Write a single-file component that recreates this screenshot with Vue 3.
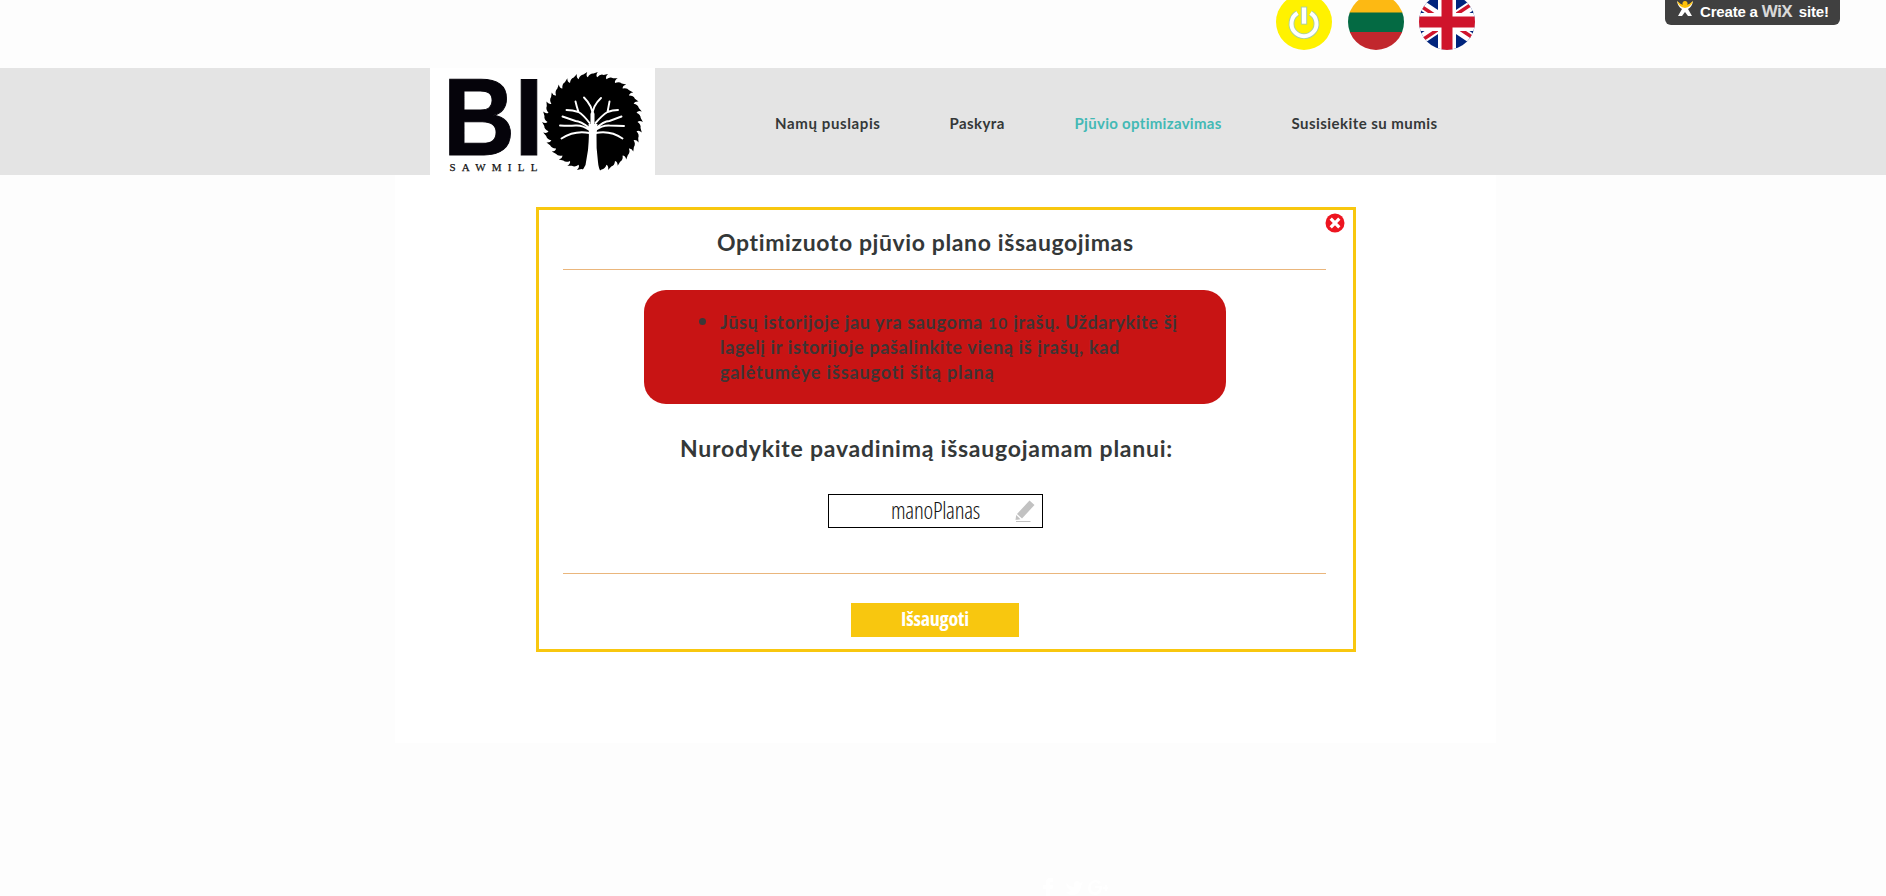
<script setup>
const nav = [
  { label: 'Namų puslapis', cls: 'home' },
  { label: 'Paskyra', cls: 'account' },
  { label: 'Pjūvio optimizavimas', cls: 'active' },
  { label: 'Susisiekite su mumis', cls: 'contact' },
]

// Circular saw outline: hooked teeth around the disc
const teeth = 30
const pt = (r, a) => `${(50 + r * Math.cos(a)).toFixed(2)} ${(50 + r * Math.sin(a)).toFixed(2)}`
const step = (Math.PI * 2) / teeth
let blade = `M${pt(45, 0)}`
for (let i = 0; i < teeth; i++) {
  const a = i * step
  blade += `Q${pt(48.8, a + step * 0.25)} ${pt(48.4, a + step * 0.6)}L${pt(50.4, a + step)}Q${pt(47, a + step * 0.8)} ${pt(45, a + step)}`
}
blade += 'Z'
</script>

<template>
  <div class="page">
    <div class="topbar">
      <div class="circles">
        <svg class="circle" viewBox="0 0 56 56">
          <circle cx="28" cy="28" r="28" fill="#fff200" />
          <g fill="none" stroke-linecap="butt">
            <path d="M21.500 19A12.500 12.500 0 1 0 34.500 19" stroke="#a9cfa0" stroke-width="5.800" />
            <path d="M28 12.600V30.600" stroke="#a9cfa0" stroke-width="6.400" />
            <path d="M21.500 19A12.500 12.500 0 1 0 34.500 19" stroke="#fff" stroke-width="4" />
            <path d="M28 13.500V29.700" stroke="#fff" stroke-width="4.400" />
          </g>
        </svg>
        <svg class="circle" viewBox="0 0 56 56">
          <defs><clipPath id="lt"><circle cx="28" cy="28" r="28" /></clipPath></defs>
          <g clip-path="url(#lt)">
            <path fill="#fdb913" d="M0 0h56v19H0z" />
            <path fill="#046a43" d="M0 18.500h56v20H0z" />
            <path fill="#c1272d" d="M0 38h56v18H0z" />
          </g>
        </svg>
        <svg class="circle" viewBox="0 0 56 56">
          <defs><clipPath id="uk"><circle cx="28" cy="28" r="28" /></clipPath></defs>
          <g clip-path="url(#uk)">
            <path fill="#00247d" d="M0 0h56v56H0z" />
            <path d="M-8 4L64 52M64 4L-8 52" stroke="#fff" stroke-width="10" />
            <path d="M-8 5.500L28 29.500M28 26.500L64 2.500M64 50.500L28 26.500M28 29.500L-8 53.500" stroke="#cf142b" stroke-width="3.500" />
            <path d="M28 0V56M0 28H56" stroke="#fff" stroke-width="18" />
            <path d="M28 0V56M0 28H56" stroke="#cf142b" stroke-width="11" />
          </g>
        </svg>
      </div>
      <div class="wix">
        <svg class="wix-man" viewBox="0 0 18 18">
          <path d="M1 1Q2 7 6 9L2 16H6L9 12L12 16H16L12 9Q16 7 17 1Q13 6 9 6Q5 6 1 1Z" fill="#fff" />
          <path d="M1 1Q3 7 9 8Q15 7 17 1Q13 5 9 5.500Q5 5 1 1Z" fill="#ffc20a" />
          <circle cx="9" cy="3.500" r="2.500" fill="#ffc20a" />
        </svg>
        <span class="wix-text">Create a</span>
        <span class="wix-logo">WiX</span>
        <span class="wix-text">site!</span>
      </div>
    </div>

    <header class="header">
      <svg class="logo" viewBox="0 0 225 107">
        <rect width="225" height="107" fill="#fff" />
        <g class="bi">
          <text x="13" y="86.500" font-size="110" textLength="72" lengthAdjust="spacingAndGlyphs">B</text>
          <text x="84" y="86.500" font-size="110" textLength="30" lengthAdjust="spacingAndGlyphs">I</text>
        </g>
        <text class="mill" x="19.500" y="102.500" font-size="11" textLength="88">SAWMILL</text>
        <svg x="112" y="3.500" width="101" height="101" viewBox="-.5 -.5 101 101">
          <path :d="blade" fill="#000" />
          <path fill="#fff" d="M46 52Q47 62 45.500 78L43 93Q41 97 38 101H59Q56 97 55.500 90Q53.500 76 54 63L55 52Z" />
          <g fill="none" stroke="#fff" stroke-linecap="round">
            <path stroke-width="4" d="M50 62V42" />
            <path stroke-width="1.900" d="M50 43Q50 34 58.500 26M50 43Q50 34 41.500 25.500M47 51Q41 43 36 40Q34 34 33 29.500M36 40Q30 38 24 38M53 51Q60 43 65 40Q66 35 67 29.500M65 40Q70 38 75.500 38M47 56Q38 49 33 49L20 44.500M33 53.500Q26 54 17.500 53.500M47 58Q40 53 33 53.500M53 57Q61 49 67 49L79 44.500M53 58Q60 53 67 53.500L81.500 54M47 61Q32 58 19 66.500M53 61Q68 58 80 66.500" />
          </g>
        </svg>
      </svg>
      <nav class="nav">
        <a v-for="n in nav" :key="n.label" :class="['link', n.cls]">{{ n.label }}</a>
      </nav>
    </header>

    <main class="content">
      <section class="dialog">
        <svg class="close" viewBox="0 0 20 20">
          <circle cx="10" cy="10" r="9.500" fill="#ed1520" />
          <path d="M5.700 5.700L14.300 14.300M14.300 5.700L5.700 14.300" stroke="#fff" stroke-width="3.200" />
        </svg>
        <h1 class="title"><span class="t1">Optimizuoto pjūvio plano išsaugojimas</span></h1>
        <hr class="rule" />
        <div class="alert">
          <span class="bullet"></span>
          <p class="message">
            <span class="m1">Jūsų istorijoje jau yra saugoma <small>10</small> įrašų. Uždarykite šį</span>
            <span class="m2">lagelį ir istorijoje pašalinkite vieną iš įrašų, kad</span>
            <span class="m3">galėtumėye išsaugoti šitą planą</span>
          </p>
        </div>
        <h2 class="prompt"><span class="t2">Nurodykite pavadinimą išsaugojamam planui:</span></h2>
        <div class="field">
          <span class="value">manoPlanas</span>
          <svg class="pencil" viewBox="0 0 20 23">
            <path fill="#c2c2c2" d="M14.500 .5L19.500 5L7 18.500L2 14ZM1.200 15L5.500 19.200L.5 20Z" />
            <path fill="#c2c2c2" d="M1 21H15.500V22H1Z" />
          </svg>
        </div>
        <hr class="rule second" />
        <button class="save"><span>Išsaugoti</span></button>
      </section>
    </main>

    <footer class="social">
      <svg width="66" height="22" viewBox="0 0 66 22" fill="#fff">
        <path d="M4 20V11H1V7H4V4Q4 0 8 0H11V4H9Q8 4 8 5V7H11L10.500 11H8V20Z" />
        <path d="M24 14Q28 14 29 12Q25 11 24 5Q28 9 32 9Q31 3 35 3Q37 3 38 5L41 4L39 8Q38 18 29 17Q26 17 24 14Z" />
        <path d="M57 6Q54 3 51 5Q48 7 49 11Q50 15 54 14Q57 13 57 10H53V8H60Q60 17 53 17Q46 16 46 10Q47 3 53 2Q57 2 59 4ZM61 9H63V7H65V9H66V11H65V13H63V11H61Z" />
      </svg>
    </footer>
  </div>
</template>

<style>
body {
  margin: 0;
  background: #fdfdfd;
}
</style>

<style scoped>
.page {
  height: 896px;
  overflow: hidden;
  display: flex;
  flex-direction: column;
  background: #fdfdfd;
  font-family: Lato, "Open Sans", sans-serif;
  color: #343838;
}
.topbar {
  height: 68px;
  flex: none;
  display: flex;
  justify-content: space-between;
  align-items: flex-start;
  padding: 0 46px 0 1276px;
}
.circles {
  display: flex;
  gap: 15.500px;
  margin-top: -6px;
}
.circle {
  width: 56px;
  height: 56px;
  display: block;
}
.wix {
  box-sizing: border-box;
  width: 175px;
  height: 25px;
  border-radius: 0 0 6px 6px;
  background: #404040;
  color: #fff;
  display: flex;
  align-items: flex-start;
  padding-left: 11px;
  font: bold 15px/24px "Liberation Sans", Arial, sans-serif;
  white-space: nowrap;
}
.wix-man {
  width: 18px;
  height: 18px;
  margin-right: 6px;
}
.wix-text {
  letter-spacing: -0.180px;
}
.wix-logo {
  width: 30px;
  margin: 0 7px 0 4px;
  font: 700 16.500px/21px "Open Sans", sans-serif;
  color: #d8d8d8;
  letter-spacing: -0.600px;
}
.header {
  height: 107px;
  flex: none;
  display: flex;
  background: #e4e4e4;
  padding-left: 430px;
}
.logo {
  width: 225px;
  height: 107px;
  flex: none;
  overflow: visible;
}
.bi {
  font-family: "Liberation Sans", Arial, sans-serif;
  font-weight: bold;
  fill: #05030a;
  stroke: #05030a;
  stroke-width: 1px;
}
.mill {
  font-family: "Liberation Serif", serif;
  fill: #111;
  stroke: #111;
  stroke-width: 0.250px;
}
.nav {
  display: flex;
  margin-left: 120px;
  padding-top: 43px;
}
.link {
  font-size: 15px;
  line-height: 24px;
  font-weight: 700;
  white-space: nowrap;
}
.home { width: 174.500px; letter-spacing: 0.620px; }
.account { width: 125px; letter-spacing: 0.420px; }
.active { width: 217px; letter-spacing: 0.300px; color: #43b9b5; }
.contact { letter-spacing: 0.450px; }
.content {
  box-sizing: border-box;
  width: 1101px;
  height: 568px;
  flex: none;
  margin-left: 395px;
  padding: 32px 0 0 141px;
  background: #fff;
}
.dialog {
  box-sizing: border-box;
  position: relative;
  width: 820px;
  height: 445px;
  border: 3px solid #f8c70f;
  background: #fff;
  padding-left: 24px;
}
.close {
  position: absolute;
  left: 785.500px;
  top: 3px;
  width: 20px;
  height: 20px;
}
.title,
.prompt {
  margin: 0;
  font-size: 23px;
  line-height: 30px;
  font-weight: 700;
  white-space: nowrap;
}
.title {
  padding: 17px 0 1px 154px;
}
.t1 { letter-spacing: 0.610px; }
.t2 { letter-spacing: 0.760px; }
.rule {
  width: 763px;
  height: 1px;
  border: 0;
  margin: 11px 0 0;
  background: #eab67c;
}
.alert {
  box-sizing: border-box;
  width: 582px;
  height: 114px;
  margin: 20px 0 0 81px;
  padding: 20px 0 0 55px;
  border-radius: 22px;
  background: #c81414;
  display: flex;
}
.bullet {
  width: 7px;
  height: 7px;
  margin: 8px 14px 0 0;
  border-radius: 50%;
  background: #3c3838;
}
.message {
  margin: 0;
  font-size: 18px;
  line-height: 25px;
  font-weight: 700;
  white-space: nowrap;
  color: #3f3434;
}
.message span { display: block; width: max-content; height: 25px; }
.message small { font-size: 15.500px; line-height: 1; letter-spacing: 1.200px; }
.m1 { letter-spacing: 0.650px; }
.m2 { letter-spacing: 0.660px; }
.m3 { letter-spacing: 0.860px; }
.prompt {
  padding: 29px 0 1px 117px;
}
.field {
  box-sizing: border-box;
  width: 215px;
  height: 34px;
  margin: 30px 0 0 265px;
  border: 1px solid #000;
  display: flex;
  align-items: flex-start;
  padding: 5px 7px 0 62px;
  justify-content: space-between;
}
.value {
  margin-top: -2px;
  font: 300 23px/25px "Open Sans", sans-serif;
  font-stretch: 75%;
  letter-spacing: -0.250px;
  color: #111;
}
.pencil {
  width: 20px;
  height: 23px;
}
.second {
  margin-top: 45px;
}
.save {
  width: 168px;
  height: 34px;
  margin: 29px 0 0 288px;
  padding: 0 0 2px;
  border: 0;
  display: block;
  background: #f8c70f;
  color: #fff;
  font: 700 20px/32px "Open Sans", sans-serif;
  font-stretch: 75%;
  letter-spacing: -0.200px;
}
.social {
  margin: 135px 0 0 1042px;
  height: 18px;
}
</style>
